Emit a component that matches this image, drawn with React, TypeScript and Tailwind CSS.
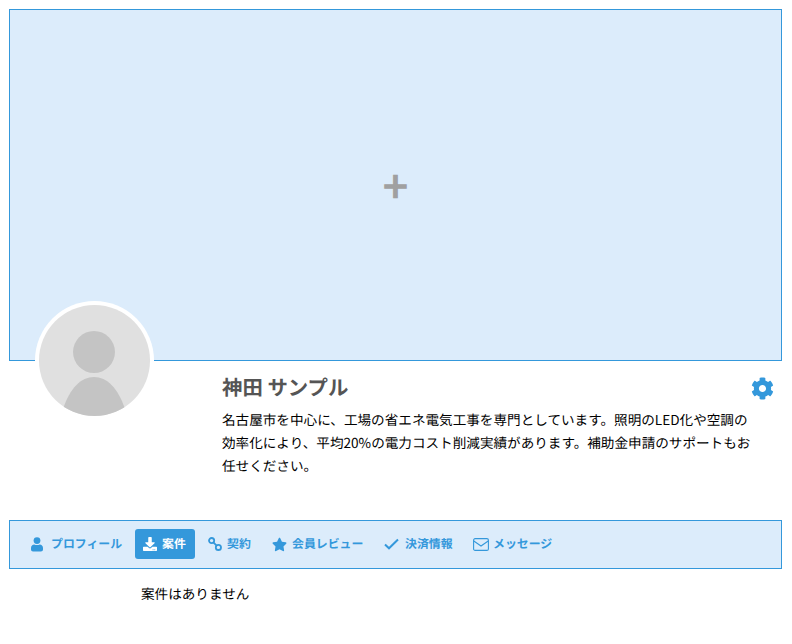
import { FaDownload, FaStar, FaCog } from "react-icons/fa";

const font = { fontFamily: '"Noto Sans CJK JP", sans-serif' };

function LinkIcon() {
  return (
    <svg width="14" height="14" viewBox="0 0 14 14" fill="none" stroke="currentColor" strokeWidth="1.8">
      <circle cx="3.6" cy="3.6" r="2.6" />
      <circle cx="10.4" cy="10.4" r="2.6" />
      <path d="M5.6 5.6 8.4 8.4" />
    </svg>
  );
}

function UserIcon() {
  return (
    <svg width="12" height="15" viewBox="0 0 12 15" fill="currentColor">
      <circle cx="6" cy="3.6" r="3.4" />
      <path d="M0 11c0-2.4 1.6-3.6 3.2-3.6 1 .5 1.8.7 2.8.7s1.800-.2 2.800-.7C10.400 7.400 12 8.600 12 11v1.600c0 1.200-.9 2-2 2H2c-1.100 0-2-.8-2-2z" />
    </svg>
  );
}

function CheckIcon() {
  return (
    <svg width="15" height="12" viewBox="0 0 15 12" fill="none" stroke="currentColor" strokeWidth="2">
      <path d="M1 6.500 5 10.300 14 1.500" />
    </svg>
  );
}

function MailIcon() {
  return (
    <svg width="16" height="13" viewBox="0 0 16 13" fill="none" stroke="currentColor" strokeWidth="1.1">
      <rect x="0.6" y="0.6" width="14.800" height="11.800" rx="1.500" />
      <path d="M0.800 3 8 8 15.200 3" />
    </svg>
  );
}

function Tab({ icon, label, active, className }: { icon: React.ReactNode; label: string; active?: boolean; className: string }) {
  return (
    <div
      className={`flex h-[30px] items-center rounded-[3px] text-[11.9px] font-bold ${className} ${
        active ? "bg-[#3498db] text-white" : "text-[#3498db]"
      }`}
    >
      {icon}
      <span>{label}</span>
    </div>
  );
}

export default function App() {
  return (
    <div className="min-h-[644px] bg-white pt-[9px] pr-[10px] pl-[9px] text-black [text-rendering:geometricPrecision]" style={font}>
      <div className="flex h-[352px] items-center justify-center border border-[#3498db] bg-[#dcecfb] pb-[2px]">
        <span className="text-[44px] leading-none font-bold text-[#a0a0a0]">+</span>
      </div>

      <div className="relative h-[159px]">
        <div className="absolute top-[-60px] left-[26px] flex h-[119px] w-[119px] items-center justify-center rounded-full bg-white">
          <svg width="111" height="111" viewBox="0 0 111 111">
            <defs>
              <clipPath id="avatar-clip">
                <circle cx="55.5" cy="55.5" r="55.5" />
              </clipPath>
            </defs>
            <circle cx="55.5" cy="55.5" r="55.5" fill="#e0e0e0" />
            <g clipPath="url(#avatar-clip)" fill="#c4c4c4">
              <circle cx="55" cy="47" r="21" />
              <path d="M24 104C31 83 42 72 55 72C68 72 79 83 86 104V111H24Z" />
            </g>
          </svg>
        </div>

        <div className="flex justify-between pt-[10px] pl-[213px]">
          <div className="w-[530px]">
            <h1 className="text-[20.4px] leading-[30px] font-bold text-[#555555]">神田 サンプル</h1>
            <p className="mt-[7px] text-[13.6px] leading-[23px]">
              名古屋市を中心に、工場の省エネ電気工事を専門としています。照明のLED化や空調の効率化により、平均20%の電力コスト削減実績があります。補助金申請のサポートもお任せください。
            </p>
          </div>
          <FaCog className="mt-[6px] mr-[8px] text-[23px] text-[#3498db]" />
        </div>
      </div>

      <div className="flex h-[49px] items-center border border-[#3498db] bg-[#dcecfb] pb-[1px] pl-[21px]">
        <Tab className="w-[104px] gap-[8px]" label="プロフィール" icon={<UserIcon />} />
        <Tab className="w-[60px] gap-[5px] pl-[8px]" active label="案件" icon={<FaDownload className="text-[14px]" />} />
        <Tab className="ml-[13px] w-[64px] gap-[5px]" label="契約" icon={<LinkIcon />} />
        <Tab className="w-[112px] gap-[5px]" label="会員レビュー" icon={<FaStar className="text-[15px]" />} />
        <Tab className="w-[89px] gap-[6px]" label="決済情報" icon={<CheckIcon />} />
        <Tab className="gap-[4px]" label="メッセージ" icon={<MailIcon />} />
      </div>

      <p className="mt-[14px] pl-[132px] text-[13.6px] leading-[21px]">案件はありません</p>
    </div>
  );
}
